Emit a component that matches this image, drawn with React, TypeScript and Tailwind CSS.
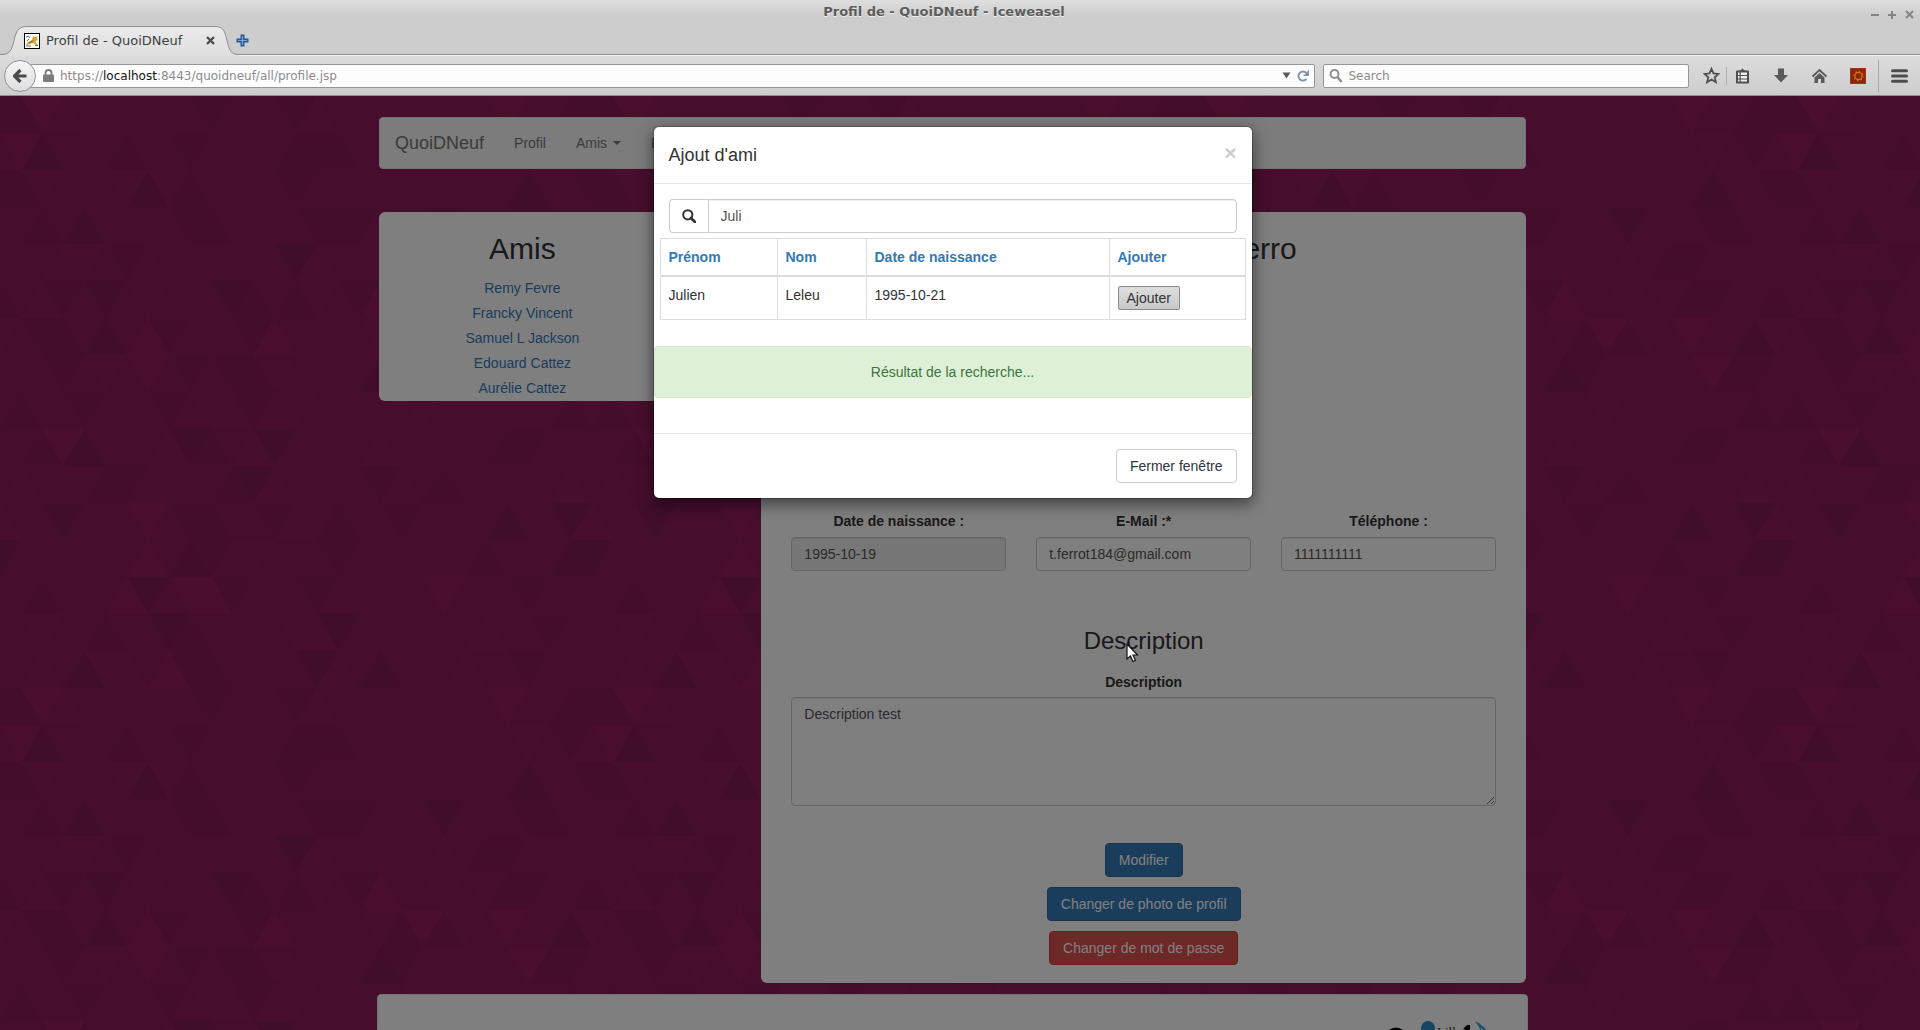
import React from "react";

const TILE = 592;
const HALF = TILE / 28;
const ROW = TILE / 16;

type Tone = "a" | "b" | "c" | "d";
const TONES: Record<Tone, string> = {
  a: "#961e5c",
  b: "#8f1d5a",
  c: "#881b56",
  d: "#831b53",
};

/* One entry per row of the triangle tile: [column, tone] pairs. */
const TRIANGLES: [number, Tone][][] = [
  [[1, "a"], [2, "b"], [0, "c"], [9, "c"], [13, "c"], [14, "b"], [23, "a"], [26, "c"], [27, "c"]],
  [[0, "a"], [1, "d"], [5, "c"], [13, "c"], [14, "c"], [15, "c"], [24, "b"], [27, "b"], [26, "c"], [8, "c"]],
  [[1, "b"], [0, "c"], [5, "b"], [6, "d"], [7, "b"], [8, "c"], [13, "c"], [24, "d"], [27, "c"]],
  [[3, "d"], [8, "c"], [9, "c"], [14, "c"], [15, "c"], [16, "c"], [20, "d"], [24, "c"], [25, "c"], [1, "c"]],
  [[6, "b"], [13, "d"], [2, "b"], [3, "b"], [14, "b"], [20, "b"], [22, "c"], [23, "c"], [5, "c"]],
  [[1, "b"], [2, "c"], [4, "d"], [6, "b"], [10, "d"], [11, "c"], [13, "c"], [14, "b"], [16, "c"], [17, "a"], [20, "b"], [22, "b"], [23, "c"], [24, "c"], [27, "c"]],
  [[1, "c"], [2, "c"], [4, "d"], [6, "a"], [7, "c"], [11, "c"], [12, "a"], [18, "c"], [19, "a"], [20, "c"], [21, "b"], [23, "a"], [26, "d"], [27, "b"], [17, "b"]],
  [[6, "a"], [4, "b"], [2, "c"], [11, "c"], [10, "c"], [12, "b"], [17, "d"], [18, "c"], [24, "a"], [26, "c"], [25, "c"], [8, "c"]],
  [[3, "c"], [9, "b"], [10, "b"], [11, "c"], [12, "b"], [13, "b"], [19, "b"], [0, "c"], [7, "c"], [26, "c"]],
  [[2, "a"], [1, "c"], [3, "d"], [7, "b"], [8, "d"], [9, "c"], [11, "b"], [12, "d"], [17, "b"], [23, "c"], [24, "c"]],
  [[0, "b"], [4, "c"], [5, "c"], [10, "c"], [11, "d"], [12, "b"], [17, "c"], [18, "b"], [20, "c"], [26, "b"]],
  [[2, "d"], [6, "a"], [8, "c"], [9, "c"], [12, "c"], [13, "b"], [14, "b"], [15, "c"], [18, "c"], [23, "d"], [26, "d"], [27, "b"]],
  [[6, "a"], [8, "d"], [9, "c"], [10, "b"], [11, "b"], [15, "c"], [26, "d"], [27, "d"], [22, "c"]],
  [[5, "a"], [6, "d"], [8, "a"], [9, "a"], [10, "c"], [14, "c"], [20, "a"], [1, "c"], [24, "c"]],
  [[4, "c"], [7, "d"], [8, "c"], [13, "b"], [14, "b"], [15, "d"], [22, "b"], [25, "c"], [1, "b"]],
  [[1, "b"], [3, "d"], [4, "b"], [5, "b"], [7, "a"], [9, "c"], [14, "d"], [15, "b"], [17, "d"], [21, "b"], [24, "c"], [8, "c"]],
];

function trianglePoints(row: number, col: number, shift: number) {
  const x = col * HALF + shift;
  const y = row * ROW;
  return (row + col) % 2 === 0
    ? `${x},${y + ROW} ${x + HALF},${y} ${x + 2 * HALF},${y + ROW}`
    : `${x},${y} ${x + HALF},${y + ROW} ${x + 2 * HALF},${y}`;
}

function TrianglesBackground() {
  return (
    <svg className="absolute inset-0 h-full w-full" aria-hidden="true">
      <defs>
        <pattern id="triangles" width={TILE} height={TILE} patternUnits="userSpaceOnUse">
          <rect width={TILE} height={TILE} fill="#8c1c58" />
          {TRIANGLES.map((cells, row) =>
            cells.map(([col, tone]) => (
              <g key={`${row}-${col}`} fill={TONES[tone]}>
                <polygon points={trianglePoints(row, col, 0)} />
                {col === 27 && <polygon points={trianglePoints(row, col, -TILE)} />}
              </g>
            )),
          )}
        </pattern>
      </defs>
      <rect width="100%" height="100%" fill="url(#triangles)" />
    </svg>
  );
}

/* ---------- Browser chrome ---------- */

function Favicon() {
  return (
    <svg width="16" height="16" viewBox="0 0 16 16" className="shrink-0">
      <rect x=".5" y=".5" width="15" height="15" fill="#fff" stroke="#000" />
      <path d="M2 12l2-3 4-2 1-4 1.500 1H12l1.500-1-.3 4-2 2 2.800 3h-2l-3-2-3 1-3 1z" fill="#d6a23c" />
      <path d="M2 4l2.500-1L6 5M2 13h5M11 12.500h3M3 8l2-2" stroke="#6b6a55" fill="none" />
      <path d="M5 9.500l4-1.500" stroke="#8a5a13" />
    </svg>
  );
}

function TitleBar() {
  return (
    <div className="relative flex h-[26px] items-start justify-center pr-8 text-[#5c5c5c]">
      <h1 className="text-[13px] leading-6 font-bold [text-shadow:0_1px_0_#f0f0f0]">
        Profil de - QuoiDNeuf - Iceweasel
      </h1>
      <div className="absolute top-[10px] right-[6px] flex gap-2 text-[#858585]">
        <button aria-label="Réduire" className="block">
          <svg width="9" height="9" viewBox="0 0 9 9"><path d="M0 5h8" stroke="currentColor" strokeWidth="2" /></svg>
        </button>
        <button aria-label="Agrandir" className="block">
          <svg width="9" height="9" viewBox="0 0 9 9"><path d="M0 5h8M4 1v8" stroke="currentColor" strokeWidth="2" /></svg>
        </button>
        <button aria-label="Fermer" className="block">
          <svg width="9" height="9" viewBox="0 0 9 9"><path d="M1 1l7 7M8 1 1 8" stroke="currentColor" strokeWidth="2" /></svg>
        </button>
      </div>
    </div>
  );
}

function TabStrip() {
  return (
    <div className="relative flex h-[29px] items-center border-b border-[#8f8f8f]">
      <svg className="absolute top-0 left-0" width="240" height="30" viewBox="0 0 240 30" aria-hidden="true">
        <defs>
          <linearGradient id="tab" x1="0" y1="0" x2="0" y2="1">
            <stop offset="0" stopColor="#ebebeb" />
            <stop offset="1" stopColor="#dedede" />
          </linearGradient>
        </defs>
        <path d="M0 28.500h2c6 0 9-3 11-10l2-8C17 3.500 20 .5 27 .5h188c7 0 9 3 11 10l2 8c2 7 4 10 11 10v1.500H0z" fill="url(#tab)" />
        <path d="M0 28.500h2c6 0 9-3 11-10l2-8C17 3.500 20 .5 27 .5h188c7 0 9 3 11 10l2 8c2 7 4 10 11 10" fill="none" stroke="#8f8f8f" />
      </svg>
      <div className="relative flex w-[215px] items-center gap-[6px] pt-px pl-6 text-[13px] text-[#3f3f3f]">
        <Favicon />
        <span className="grow whitespace-nowrap">Profil de - QuoiDNeuf</span>
        <button aria-label="Fermer l'onglet">
          <svg width="9" height="9" viewBox="0 0 9 9"><path d="M1 1l7 7M8 1 1 8" stroke="#4d4d4d" strokeWidth="2.400" /></svg>
        </button>
      </div>
      <button aria-label="Nouvel onglet" className="relative ml-[21px] pt-px">
        <svg width="13" height="13" viewBox="0 0 13 13">
          <path d="M4.500.5h4v4h4v4h-4v4h-4v-4h-4v-4h4z" fill="#2a569a" />
          <path d="M6.500 2v9M2 6.500h9" stroke="#7ba6dc" strokeWidth="1.200" />
        </svg>
      </button>
    </div>
  );
}

function Toolbar() {
  return (
    <div className="flex h-[41px] items-center border-t border-b border-t-[#f2f2f2] border-b-[#8a8a8a] bg-linear-to-b from-[#dcdcdc] to-[#cdcdcd] pr-3 pl-1">
      <button aria-label="Page précédente" className="relative z-10 flex size-8 shrink-0 items-center justify-center rounded-full border border-[#8d96a3] bg-linear-to-b from-[#f6f6f6] to-[#dedede]">
        <svg width="16" height="16" viewBox="0 0 16 16">
          <path d="M8.500 2 2.500 8l6 6M3 8h11.500" fill="none" stroke="#4c4c4c" strokeWidth="3.200" strokeLinejoin="round" />
        </svg>
      </button>
      <div className="-ml-2 flex h-6 grow items-center rounded-r-xs border border-[#969696] bg-[#fdfdfd] pr-1 pl-[14px]">
        <svg width="11" height="13" viewBox="0 0 11 13" className="shrink-0">
          <rect x="0" y="5.500" width="11" height="7.500" rx="1" fill="#7c7c7c" />
          <path d="M2.500 6V4a3 3 0 0 1 6 0v2" fill="none" stroke="#7c7c7c" strokeWidth="1.800" />
        </svg>
        <a href="#" className="ml-[6px] grow text-[12px] whitespace-nowrap text-[#8c8c8c]">
          https://<span className="text-[#111]">localhost</span>:8443/quoidneuf/all/profile.jsp
        </a>
        <button aria-label="Historique">
          <svg width="9" height="7" viewBox="0 0 9 7"><path d="M.5.500h8L4.500 6.500z" fill="#5b5b5b" /></svg>
        </button>
        <button aria-label="Actualiser" className="ml-[6px]">
          <svg width="13" height="14" viewBox="0 0 13 14">
            <path d="M9.500 9.800A4.500 4.500 0 1 1 9.200 4" fill="none" stroke="#8296a8" strokeWidth="2" />
            <path d="M12 .5V7H6z" fill="#8296a8" />
          </svg>
        </button>
      </div>
      <label className="ml-2 flex h-6 w-[19.200%] items-center rounded-xs border border-[#969696] bg-[#fdfdfd] px-[5px]">
        <svg width="15" height="14" viewBox="0 0 15 14" className="shrink-0">
          <circle cx="5.500" cy="5" r="4" fill="none" stroke="#8f8f8f" strokeWidth="2" />
          <path d="M8.500 8l4 5" stroke="#8f8f8f" strokeWidth="2.600" />
        </svg>
        <input aria-label="Search" placeholder="Search" className="ml-1 w-full bg-transparent text-[12px] outline-none placeholder:text-[#8c8c8c]" />
      </label>
      <div className="ml-[14px] flex items-center text-[#5a5a5a]">
        <button aria-label="Marque-page">
          <svg width="17" height="17" viewBox="0 0 17 17">
            <path d="M8.500 1.800l2 4.600 5 .5-3.800 3.300 1.200 5-4.400-2.700-4.400 2.700 1.200-5L1.500 6.900l5-.5z" fill="none" stroke="#4f4f4f" strokeWidth="1.800" />
          </svg>
        </button>
        <span className="ml-[6px] h-[18px] w-px bg-[#b0b0b0]" />
        <button aria-label="Marque-pages" className="ml-2">
          <svg width="15" height="16" viewBox="0 0 15 16">
            <path d="M2 3.500h11v11H2z" fill="#f0f0f0" stroke="#4f4f4f" strokeWidth="2" strokeLinejoin="round" />
            <path d="M3.500 4V2.500h2L7.500.5l2 2h2V4z" fill="#4f4f4f" />
            <path d="M2 7.500h11M2 11h11M5.200 4v10" stroke="#4f4f4f" strokeWidth="1.200" />
          </svg>
        </button>
        <button aria-label="Téléchargements" className="ml-6">
          <svg width="14" height="15" viewBox="0 0 14 15"><path d="M4 .5h6V7h4l-7 7.500L0 7h4z" fill="#5a5a5a" /></svg>
        </button>
        <button aria-label="Accueil" className="ml-6">
          <svg width="15" height="14" viewBox="0 0 15 14">
            <path d="M.5 7.500l7-6.500 7 6.500" fill="none" stroke="#555" strokeWidth="1.800" />
            <path d="M2.500 8.500l5-4.500 5 4.500V14H9v-4H6v4H2.500z" fill="#5a5a5a" />
          </svg>
        </button>
        <button aria-label="Extension" className="ml-[23px]">
          <svg width="16" height="16" viewBox="0 0 16 16">
            <rect width="16" height="16" fill="#a03412" />
            <rect x="1" y="1" width="14" height="14" fill="#8e2508" />
            <circle cx="8.500" cy="8" r="3.600" fill="none" stroke="#cf7a1c" strokeWidth="1.200" />
            <circle cx="8.500" cy="8" r="4.600" fill="none" stroke="#cf7a1c" strokeWidth="1.200" strokeDasharray="1.200 2.410" />
          </svg>
        </button>
        <span className="ml-3 h-8 w-px bg-[#a4a9b0]" />
        <button aria-label="Menu" className="ml-3">
          <svg width="17" height="14" viewBox="0 0 17 14">
            <path d="M1.500 1.800h14M1.500 7h14M1.500 12.200h14" stroke="#4d4d4d" strokeWidth="3" strokeLinecap="round" />
          </svg>
        </button>
      </div>
    </div>
  );
}

/* ---------- Page ---------- */

const FRIENDS = ["Remy Fevre", "Francky Vincent", "Samuel L Jackson", "Edouard Cattez", "Aurélie Cattez"];

const CONTACT = [
  { id: "birth", label: "Date de naissance :", value: "1995-10-19", disabled: true },
  { id: "mail", label: "E-Mail :*", value: "t.ferrot184@gmail.com", disabled: false },
  { id: "phone", label: "Téléphone :", value: "1111111111", disabled: false },
];

function Navbar() {
  return (
    <nav className="flex h-[52px] items-center gap-[30px] rounded border border-[#e7e7e7] bg-[#f8f8f8] px-[15px] text-[#777]">
      <a href="#" className="text-[18px] leading-5">QuoiDNeuf</a>
      <a href="#">Profil</a>
      <a href="#" className="flex items-center gap-[6px]">
        Amis
        <svg width="8" height="4" viewBox="0 0 8 4"><path d="M0 0h8L4 4z" fill="currentColor" /></svg>
      </a>
      <a href="#">Déconnexion</a>
    </nav>
  );
}

function FriendsPanel() {
  return (
    <section className="w-1/4 rounded-md bg-white pt-5 text-center">
      <h2 className="mb-[11px] text-[30px] leading-[33px]">Amis</h2>
      <ul>
        {FRIENDS.map((name) => (
          <li key={name} className="leading-[25px]">
            <a href="#" className="text-[#337ab7]">{name}</a>
          </li>
        ))}
      </ul>
    </section>
  );
}

const FIELD = "w-full rounded border border-[#ccc] px-3 text-[#555] shadow-[inset_0_1px_1px_rgba(0,0,0,0.075)]";

function ProfilePanel() {
  return (
    <section className="w-2/3 rounded-md bg-white px-[30px] pt-5 pb-[18px] text-center">
      <h2 className="text-[30px] leading-[33px]">Profil de Thomas Ferro</h2>
      <div className="mt-[246px] grid grid-cols-3 gap-[30px]">
        {CONTACT.map((f) => (
          <div key={f.id}>
            <label htmlFor={f.id} className="mb-[6px] block font-bold">{f.label}</label>
            <input
              id={f.id}
              defaultValue={f.value}
              disabled={f.disabled}
              className={`${FIELD} h-[34px] ${f.disabled ? "bg-[#eee]" : "bg-white"}`}
            />
          </div>
        ))}
      </div>
      <h3 className="mt-[57px] text-[24px] leading-[26px]">Description</h3>
      <label htmlFor="description" className="mt-[18px] mb-[5px] block font-bold">Description</label>
      <textarea id="description" defaultValue="Description test" className={`${FIELD} block h-[109px] resize-y bg-white py-[6px]`} />
      <div className="mt-[37px] flex flex-col items-center gap-[10px] text-white">
        <button className="h-[34px] rounded border border-[#2e6da4] bg-[#337ab7] px-[13px]">Modifier</button>
        <button className="h-[34px] rounded border border-[#2e6da4] bg-[#337ab7] px-[13px]">Changer de photo de profil</button>
        <button className="h-[34px] rounded border border-[#d43f3a] bg-[#d9534f] px-[13px]">Changer de mot de passe</button>
      </div>
    </section>
  );
}

function PageFooter() {
  return (
    <footer className="-mx-[2px] mt-[11px] flex h-32 justify-end rounded-t border border-[#e7e7e7] bg-white pt-[26px] pr-[37px]">
      <svg width="104" height="60" viewBox="0 0 104 60" role="img" aria-label="Lille 1">
        <circle cx="10" cy="17" r="8.500" fill="none" stroke="#000" strokeWidth="4" />
        <circle cx="42" cy="7" r="7" fill="#2b8fcb" />
        <text x="51" y="15" fontFamily="Liberation Serif, serif" fontSize="13" fill="#333">Lille</text>
        <path d="M77 8l4-4h3v12h-4V9z" fill="#000" />
        <path d="M90 1l12 12M92 3l6 12M92 2l7 6 4 8" stroke="#3aa6d8" strokeWidth="1.200" fill="none" />
      </svg>
    </footer>
  );
}

function SearchModal() {
  return (
    <div role="dialog" aria-labelledby="dialog-title" className="relative mx-auto mt-[30px] w-[600px] rounded-md border border-black/20 bg-white bg-clip-padding shadow-[0_5px_15px_rgba(0,0,0,0.5)]">
      <header className="flex justify-between border-b border-[#e5e5e5] p-[15px]">
        <h4 id="dialog-title" className="text-[18px] leading-[26px]">Ajout d'ami</h4>
        <button aria-label="Fermer" className="h-[21px] text-[21px] leading-[21px] font-bold text-[#ccc]">×</button>
      </header>
      <div className="pt-[15px] pb-[35px]">
        <div className="mx-[15px] flex h-[34px]">
          <label htmlFor="search" aria-label="Rechercher" className="flex w-[39px] items-center justify-center rounded-l border border-r-0 border-[#ccc]">
            <svg width="14" height="14" viewBox="0 0 14 14">
              <circle cx="5.800" cy="5.800" r="4.600" fill="none" stroke="#333" strokeWidth="2" />
              <path d="M9 9l4 4" stroke="#333" strokeWidth="2.800" strokeLinecap="round" />
            </svg>
          </label>
          <input id="search" defaultValue="Juli" className="min-w-0 grow rounded-r border border-[#ccc] px-3 text-[#555] shadow-[inset_0_1px_1px_rgba(0,0,0,0.075)] outline-none" />
        </div>
        <div className="mx-[6px] mt-[5px]">
          <table className="w-full table-fixed border-collapse border border-[#ddd] text-left">
            <colgroup>
              <col className="w-[117px]" />
              <col className="w-[89px]" />
              <col className="w-[243px]" />
              <col />
            </colgroup>
            <thead>
              <tr className="text-[#337ab7]">
                {["Prénom", "Nom", "Date de naissance", "Ajouter"].map((h) => (
                  <th key={h} className="border border-b-2 border-[#ddd] p-2 font-bold">{h}</th>
                ))}
              </tr>
            </thead>
            <tbody>
              <tr>
                <td className="border border-[#ddd] p-2 align-top">Julien</td>
                <td className="border border-[#ddd] p-2 align-top">Leleu</td>
                <td className="border border-[#ddd] p-2 align-top">1995-10-21</td>
                <td className="border border-[#ddd] p-2 align-top">
                  <button className="my-px block h-6 rounded-xs border border-[#8a8a8a] bg-linear-to-b from-[#dedede] to-[#c8c8c8] px-2 leading-5">Ajouter</button>
                </td>
              </tr>
            </tbody>
          </table>
        </div>
        <div role="status" className="mt-[26px] rounded border border-[#d6e9c6] bg-[#dff0d8] p-[15px] text-center text-[#3c763d]">
          Résultat de la recherche...
        </div>
      </div>
      <footer className="flex justify-end border-t border-[#e5e5e5] p-[15px]">
        <button className="h-[34px] rounded border border-[#ccc] bg-white px-[13px]">Fermer fenêtre</button>
      </footer>
    </div>
  );
}

export default function App() {
  return (
    <div className="flex h-screen flex-col overflow-hidden">
      <div className="shrink-0 bg-[#cdcdcd] bg-linear-to-b from-[#dedede] to-[#cdcdcd] to-[16px] font-['DejaVu_Sans',sans-serif]">
        <TitleBar />
        <TabStrip />
        <Toolbar />
      </div>
      <div className="relative min-h-0 grow overflow-hidden font-['Liberation_Sans',Arial,sans-serif] text-[14px] leading-5 text-[#333]">
        <TrianglesBackground />
        <main className="relative pr-[15px]">
          <div className="mx-auto max-w-[1147px] pt-[21px]">
            <Navbar />
            <div className="mt-[43px] flex items-start justify-between">
              <FriendsPanel />
              <ProfilePanel />
            </div>
            <PageFooter />
          </div>
        </main>
        <div className="absolute inset-0 bg-black/50" />
        <div className="absolute inset-0 pr-[15px]">
          <SearchModal />
        </div>
        <svg className="absolute top-[547px] left-[1126px]" width="13" height="20" viewBox="0 0 13 20" aria-hidden="true">
          <path d="M1 1v15l3.500-3 2.500 5.500 2.500-1L7 12h4.500z" fill="#fff" stroke="#111" strokeWidth="1.200" />
        </svg>
      </div>
    </div>
  );
}
